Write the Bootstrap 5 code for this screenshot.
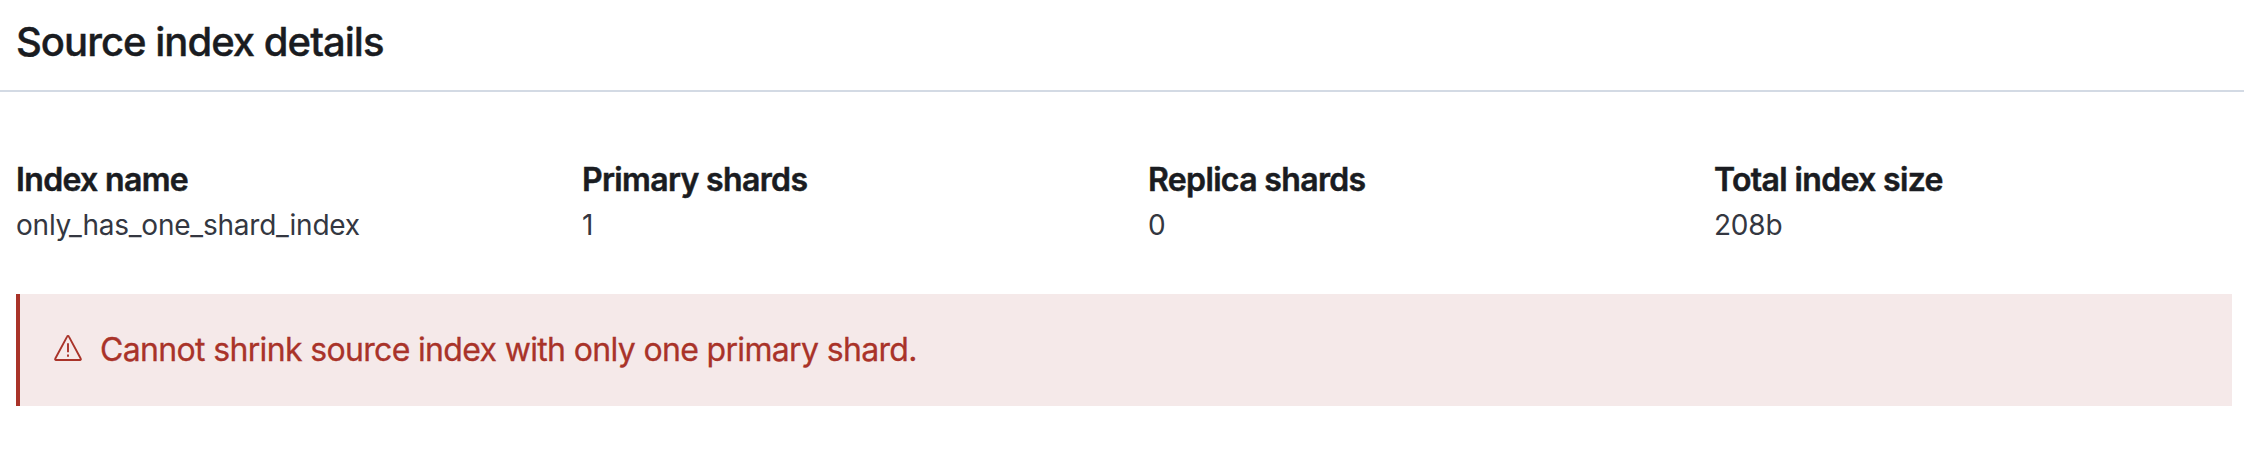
<!DOCTYPE html>
<html lang="en"><head><meta charset="utf-8"><title>Source index details</title>
<link href="https://cdn.jsdelivr.net/npm/bootstrap@5.3.0/dist/css/bootstrap.min.css" rel="stylesheet">
<style>
body{font-family:Inter,"Liberation Sans",sans-serif;color:#1a1c21;background:#fff;overflow:hidden}
.page-head{height:92px;padding:20px 16px 0;border-bottom:2px solid #d3dae4}
.page-head h1{font-size:40px;line-height:44px;font-weight:500;letter-spacing:-.97px;-webkit-text-stroke:.4px}
.details{padding:64px 12px 0 16px}
.details dl{height:138px;display:grid;grid-template-columns:repeat(4,566px)}
.details dt{font-size:32px;line-height:48px;font-weight:600;letter-spacing:-.65px;-webkit-text-stroke:.5px}
.details dd{font-size:28px;line-height:42px;color:#343741;letter-spacing:-.22px}
.callout{height:112px;border-left:4px solid #a93329;background:#f5e9e9;color:#a93329;padding-left:32px;gap:16px}
.callout p{font-size:32px;line-height:48px;letter-spacing:-.66px;-webkit-text-stroke:.3px}
</style></head><body>
<header class="page-head"><h1 class="m-0 text-nowrap"><span>Source index details</span></h1></header>
<main class="details">
<dl class="m-0">
<div><dt><span>Index name</span></dt><dd class="m-0"><span>only_has_one_shard_index</span></dd></div>
<div><dt><span>Primary shards</span></dt><dd class="m-0"><span>1</span></dd></div>
<div><dt><span>Replica shards</span></dt><dd class="m-0"><span>0</span></dd></div>
<div><dt><span>Total index size</span></dt><dd class="m-0"><span>208b</span></dd></div>
</dl>
<div class="callout d-flex align-items-center" role="alert">
<svg width="32" height="32" viewBox="0 0 32 32" fill="none" stroke="currentColor" stroke-width="1.9" stroke-linejoin="round"><path d="M15.1 2.6a1 1 0 0 1 1.8 0L28.8 24.8a.8.8 0 0 1-.7 1.2H3.9a.8.8 0 0 1-.7-1.2z"/><path d="M16 9.2V18.2M16 20.4v2.4"/></svg>
<p class="m-0"><span>Cannot shrink source index with only one primary shard.</span></p></div>
</main>
<script src="https://cdn.jsdelivr.net/npm/bootstrap@5.3.0/dist/js/bootstrap.bundle.min.js"></script>
</body></html>
